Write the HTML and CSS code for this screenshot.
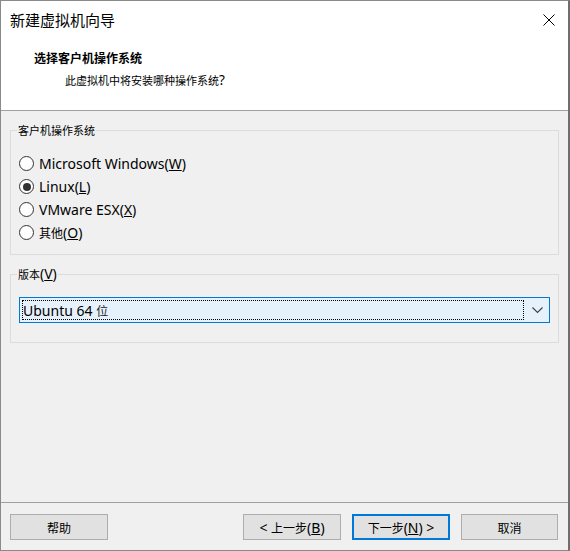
FILE: index.html
```html
<!DOCTYPE html>
<html lang="zh-CN">
<head>
<meta charset="utf-8">
<title>新建虚拟机向导</title>
<link rel="stylesheet" href="styles.css">
</head>
<body>
<div class="window">
  <div class="header">
    <div class="titlebar">
      <span class="title">新建虚拟机向导</span>
      <svg class="close" width="12" height="12" viewBox="0 0 12 12"><path d="M0.5 0.5 L11.5 11.5 M11.5 0.5 L0.5 11.5" stroke="#000" stroke-width="1" fill="none"/></svg>
    </div>
    <div class="heading">选择客户机操作系统</div>
    <div class="sub">此虚拟机中将安装哪种操作系统<span class="lat">?</span></div>
  </div>
  <div class="content">
    <fieldset class="group group-os">
      <legend>客户机操作系统</legend>
      <label class="radio"><span class="dot"></span><span class="lat">Microsoft Windows(<u>W</u>)</span></label>
      <label class="radio"><span class="dot checked"></span><span class="lat">Linux(<u>L</u>)</span></label>
      <label class="radio"><span class="dot"></span><span class="lat">VMware ESX(<u>X</u>)</span></label>
      <label class="radio"><span class="dot"></span><span class="cjk">其他</span><span class="lat">(<u>O</u>)</span></label>
    </fieldset>
    <fieldset class="group group-ver">
      <legend>版本<span class="lat">(<u>V</u>)</span></legend>
      <div class="combo">
        <span class="combo-value"><span class="lat">Ubuntu 64 </span><span class="cjk">位</span></span>
        <svg class="chevron" width="11" height="7" viewBox="0 0 11 7"><path d="M0.5 0.5 L5.5 5.5 L10.5 0.5" stroke="#444" stroke-width="1.2" fill="none"/></svg>
      </div>
    </fieldset>
  </div>
  <div class="footer">
    <button class="btn">帮助</button>
    <div class="spacer"></div>
    <button class="btn"><span class="lat">&lt; </span>上一步<span class="lat">(<u>B</u>)</span></button>
    <button class="btn primary">下一步<span class="lat">(<u>N</u>) &gt;</span></button>
    <button class="btn cancel">取消</button>
  </div>
</div>
</body>
</html>
```
FILE: styles.css
```css
html, body {
  margin: 0;
  padding: 0;
  background: #f0f0f0;
}
body {
  font-family: "Noto Sans", "Noto Sans CJK SC", sans-serif;
  font-size: 12px;
  color: #000;
}
.window {
  width: 570px;
  height: 551px;
  box-sizing: border-box;
  border: 1px solid #8a8a8a;
  border-right: 2px solid #6e6e6e;
  display: flex;
  flex-direction: column;
  background: #f0f0f0;
}
.header {
  height: 110px;
  flex: none;
  box-sizing: border-box;
  background: #fff;
  border-bottom: 1px solid #a0a0a0;
}
.titlebar {
  height: 37px;
  display: flex;
  align-items: center;
  padding: 0 13px 0 9px;
}
.title {
  font-family: "Noto Sans CJK SC", sans-serif;
  font-size: 15px;
  flex: 1;
}
.close { display: block; }
.heading {
  font-family: "Noto Sans CJK SC", sans-serif;
  font-weight: bold;
  font-size: 12px;
  line-height: 16px;
  margin: 12px 0 0 33px;
}
.sub {
  font-family: "Noto Sans CJK SC", sans-serif;
  font-size: 11px;
  line-height: 16px;
  margin: 6px 0 0 64px;
}
.lat {
  font-family: "Noto Sans", sans-serif;
}
.sub .lat { font-size: 13.5px; }
.cjk {
  font-family: "Noto Sans CJK SC", sans-serif;
}
.content {
  flex: 1;
  padding: 12px 9px 0 9px;
}
.group {
  margin: 0;
  border: 1px solid #dcdcdc;
  padding: 0 8px 0 8px;
  min-width: 0;
}
.group legend {
  font-family: "Noto Sans CJK SC", sans-serif;
  font-size: 11px;
  line-height: 14px;
  padding: 0 1px;
  margin-left: -2px;
  color: #000;
}
.group legend .lat { font-size: 14px; }
.group-os {
  padding-top: 15px;
  padding-bottom: 10px;
}
.radio {
  display: flex;
  align-items: center;
  height: 23px;
  font-size: 14px;
}
.radio .cjk { font-size: 12px; }
.dot {
  width: 13px;
  height: 13px;
  border: 1px solid #333;
  border-radius: 50%;
  background: #fff;
  margin-right: 5px;
  display: flex;
  align-items: center;
  justify-content: center;
  flex: none;
}
.dot.checked::after {
  content: "";
  width: 8px;
  height: 8px;
  border-radius: 50%;
  background: #333;
}
.group-ver {
  margin-top: 12px;
  padding-top: 16px;
  padding-bottom: 19px;
}
.combo {
  height: 26px;
  box-sizing: border-box;
  border: 1px solid #0078d7;
  background: #e5f1fb;
  display: flex;
  align-items: center;
  padding: 2px 6px 2px 2px;
}
.combo-value {
  flex: 1;
  height: 20px;
  box-sizing: border-box;
  border: 1px dotted #000;
  display: flex;
  align-items: center;
  padding-left: 0;
  margin-right: 8px;
}
.combo-value .lat { font-size: 14px; white-space: pre; }
.combo-value .cjk { font-size: 12px; color: #222; }
.chevron { display: block; }
.footer {
  height: 48px;
  flex: none;
  box-sizing: border-box;
  border-top: 1px solid #a0a0a0;
  display: flex;
  align-items: flex-start;
  padding: 11px 10px 0 9px;
}
.spacer { flex: 1; }
.btn {
  width: 98px;
  height: 26px;
  box-sizing: border-box;
  border: 1px solid #adadad;
  background: #e1e1e1;
  font-family: "Noto Sans CJK SC", sans-serif;
  font-size: 12px;
  color: #000;
  padding: 0;
  display: flex;
  align-items: center;
  justify-content: center;
  margin: 0;
}
.btn .lat { font-size: 14px; white-space: pre; }
.btn.primary {
  border: 2px solid #0078d7;
  margin-left: 11px;
}
.btn.cancel {
  width: 97px;
  margin-left: 11px;
}
```
